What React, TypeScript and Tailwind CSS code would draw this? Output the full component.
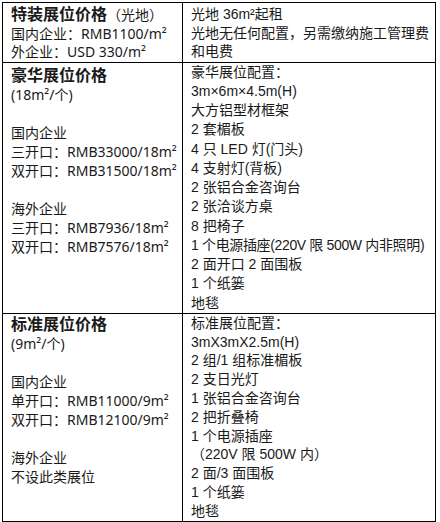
import React from "react";

const leftFont = { fontFamily: '"Noto Sans", "Noto Sans CJK SC", sans-serif' };
const rightFont = { fontFamily: '"Liberation Sans", "Noto Sans CJK SC", sans-serif' };

function Lines({ items, className }: { items: string[]; className: string }) {
  return (
    <>
      {items.map((t, i) => (
        <div key={i} className={className + " whitespace-nowrap"}>
          {t === "" ? "\u00a0" : t}
        </div>
      ))}
    </>
  );
}

export default function App() {
  return (
    <div className="bg-white w-[440px] h-[522px] pt-[2px] pl-[2px] text-[#1a1a1a]">
      <div className="w-[434px] border border-black flex flex-col">
        {/* Row 1 */}
        <div className="flex">
          <div className="w-[180px] shrink-0 border-r border-black pl-[8px] pt-[2px]" style={leftFont}>
            <div className="leading-[18.5px] whitespace-nowrap">
              <span className="text-[16px] font-bold">特装展位价格</span>
              <span className="text-[14px]">（光地）</span>
            </div>
            <Lines className="text-[14px] leading-[18.5px]" items={["国内企业：RMB1100/m²", "外企业：USD 330/m²"]} />
          </div>
          <div className="flex-1 pl-[8px] pt-[2px]" style={rightFont}>
            <Lines
              className="text-[14px] leading-[18.5px]"
              items={["光地 36m²起租", "光地无任何配置，另需缴纳施工管理费", "和电费"]}
            />
          </div>
        </div>
        {/* Row 2 */}
        <div className="flex border-t border-black">
          <div className="w-[180px] shrink-0 border-r border-black pl-[8px] pt-[2px]" style={leftFont}>
            <div className="text-[16px] font-bold leading-[20px]">豪华展位价格</div>
            <Lines
              className="text-[14px] leading-[19px]"
              items={[
                "(18m²/个)",
                "",
                "国内企业",
                "三开口：RMB33000/18m²",
                "双开口：RMB31500/18m²",
                "",
                "海外企业",
                "三开口：RMB7936/18m²",
                "双开口：RMB7576/18m²",
              ]}
            />
          </div>
          <div className="flex-1 pl-[8px]" style={rightFont}>
            <Lines
              className="text-[14px] leading-[19.25px]"
              items={[
                "豪华展位配置：",
                "3m×6m×4.5m(H)",
                "大方铝型材框架",
                "2 套楣板",
                "4 只 LED 灯(门头)",
                "4 支射灯(背板)",
                "2 张铝合金咨询台",
                "2 张洽谈方桌",
                "8 把椅子",
              ]}
            />
            <div className="text-[14px] leading-[19.25px] whitespace-nowrap tracking-[-0.35px]">
              1 个电源插座(220V 限 500W 内非照明)
            </div>
            <Lines
              className="text-[14px] leading-[19.25px]"
              items={["2 面开口 2 面围板", "1 个纸篓", "地毯"]}
            />
          </div>
        </div>
        {/* Row 3 */}
        <div className="flex border-t border-black">
          <div className="w-[180px] shrink-0 border-r border-black pl-[8px]" style={leftFont}>
            <div className="text-[16px] font-bold leading-[20px]">标准展位价格</div>
            <Lines
              className="text-[14px] leading-[19px]"
              items={[
                "(9m²/个)",
                "",
                "国内企业",
                "单开口：RMB11000/9m²",
                "双开口：RMB12100/9m²",
                "",
                "海外企业",
                "不设此类展位",
              ]}
            />
          </div>
          <div className="flex-1 pl-[8px]" style={rightFont}>
            <Lines
              className="text-[14px] leading-[18.8px]"
              items={[
                "标准展位配置：",
                "3mX3mX2.5m(H)",
                "2 组/1 组标准楣板",
                "2 支日光灯",
                "1 张铝合金咨询台",
                "2 把折叠椅",
                "1 个电源插座",
                "（220V 限 500W 内）",
                "2 面/3 面围板",
                "1 个纸篓",
                "地毯",
              ]}
            />
          </div>
        </div>
      </div>
    </div>
  );
}
